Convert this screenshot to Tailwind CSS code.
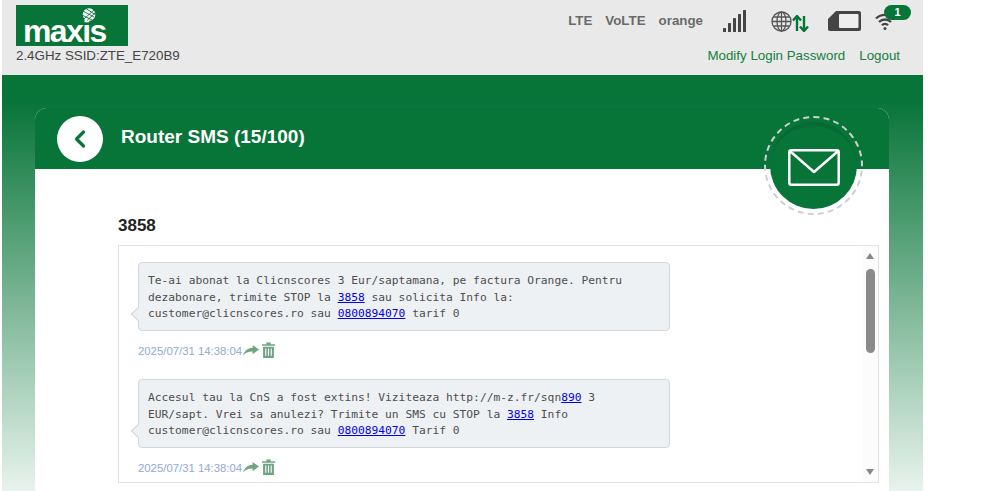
<!DOCTYPE html>
<html>
<head>
<meta charset="utf-8">
<script src="https://cdn.jsdelivr.net/npm/@tailwindcss/browser@4"></script>
</head>
<body class="bg-white overflow-hidden font-['Liberation_Sans',Arial,sans-serif]">
<div class="ml-[2px] w-[921px] h-[491px] overflow-hidden flex flex-col">
  <header class="h-[75px] shrink-0 bg-[#e9e9e9] flex justify-between pl-[14px] pr-[24px] pt-[5px]">
    <div class="flex flex-col">
      <div class="relative w-[112px] h-[41px] bg-[#077438]">
        <span class="absolute left-[7px] top-[10px] text-white font-bold text-[32px] leading-[32px] tracking-[-1.6px]">maxis</span>
        <svg class="absolute left-[66px] top-[3px]" width="14" height="13" viewBox="0 0 14 13"><circle cx="7" cy="6.500" r="6.300" fill="#fff"/><path d="M1 3 12 9M0 7l10 5M4 .5l9 6M2 11 12 2M5 12.500 13 5" stroke="#077438" stroke-width=".9" fill="none"/></svg>
      </div>
      <div class="text-[13.33px] leading-[18px] mt-px text-[#444]">2.4GHz SSID:ZTE_E720B9</div>
    </div>
    <div class="flex flex-col items-end">
      <div class="flex items-center h-[32px] text-[13.33px] font-bold text-[#6a6a6a]">
        <span>LTE</span><span class="ml-[13px]">VoLTE</span><span class="ml-[13px]">orange</span>
        <svg class="ml-[20px]" width="23" height="23" viewBox="0 0 23 23" fill="#444"><rect x="0" y="18" width="3" height="4" rx=".5"/><rect x="5" y="13" width="3" height="9" rx=".5"/><rect x="10" y="8" width="3" height="14" rx=".5"/><rect x="15" y="4" width="3" height="18" rx=".5"/><rect x="20" y="0" width="3" height="22" rx=".5"/></svg>
        <svg class="ml-[25px]" width="21" height="21" viewBox="0 0 21 21" fill="none" stroke="#555" stroke-width="1.300"><circle cx="10.500" cy="10.500" r="9.500"/><ellipse cx="10.500" cy="10.500" rx="4.500" ry="9.500"/><path d="M10.500 1v19M1 10.500h19M2.500 6h16M2.500 15h16"/></svg>
        <svg class="mt-[5px]" width="17" height="17" viewBox="0 0 17 17" fill="none" stroke="#077438" stroke-width="2.400"><path d="M5 16V2M1 5.500 5 1l4 4.500M12 1v14M8 11.500l4 4.500 4-4.500"/></svg>
        <svg class="ml-[19px]" width="33" height="20" viewBox="0 0 33 20"><path d="M8 0h23a2 2 0 0 1 2 2v16a2 2 0 0 1-2 2H2a2 2 0 0 1-2-2V8z" fill="#444"/><rect x="11" y="3" width="19.500" height="14" rx="1" fill="#eee"/></svg>
        <div class="relative ml-[14px] w-[24px] h-[24px]">
          <svg width="20" height="19" viewBox="0 0 20 19" fill="none" stroke="#444" stroke-width="2.300" class="absolute left-0 top-[3px]"><path d="M1 6.500a13 13 0 0 1 18 0M4 10a8.500 8.500 0 0 1 12 0M7 13.200a4 4 0 0 1 6 0"/><circle cx="10" cy="16.500" r="1.500" fill="#444" stroke="none"/></svg>
          <span class="absolute left-[9px] top-[-4px] w-[27px] h-[15px] rounded-full bg-[#077438] text-white text-[11px] leading-[15px] text-center font-bold">1</span>
        </div>
      </div>
      <div class="text-[13.33px] leading-[18px] mt-[10px] -mr-px text-[#13803f] flex gap-[14px]">
        <span>Modify Login Password</span><span>Logout</span>
      </div>
    </div>
  </header>
  <main class="h-[416px] shrink-0 overflow-hidden bg-[linear-gradient(180deg,#077438_0%,#077438_6%,#e8f3ed_100%)] pt-[33px] px-[33px]">
    <section class="relative bg-white rounded-t-[12px] w-[854px] h-[500px]">
      <div class="h-[61px] bg-[#077438] rounded-t-[12px] flex items-center pl-[22px]">
        <div class="w-[46px] h-[46px] rounded-full bg-white flex items-center justify-center">
          <svg width="14" height="20" viewBox="0 0 14 20" fill="none" stroke="#077438" stroke-width="3.200" stroke-linecap="round" stroke-linejoin="round"><path d="M10.500 3 3.500 10l7 7"/></svg>
        </div>
        <h1 class="ml-[18px] text-white font-bold text-[19px] leading-[22px] -mt-[3px]">Router SMS (15/100)</h1>
      </div>
      <div class="absolute left-[729px] top-[8px] w-[99px] h-[99px] rounded-full border-2 border-dashed border-[#cfcfcf] flex items-center justify-center">
        <div class="w-[87px] h-[87px] rounded-full bg-[#077438] border-t-[4px] border-[#066a33] flex items-center justify-center">
          <svg width="52" height="37" viewBox="0 0 52 37" fill="none" stroke="#fff" stroke-width="2.500" stroke-linejoin="round" stroke-linecap="round"><rect x="1.300" y="1.300" width="49.400" height="34.400" rx="2"/><path d="M3 3 26 23 49 3"/></svg>
        </div>
      </div>
      <div class="pl-[83px] pr-[10px]">
        <h2 class="mt-[47px] text-[17px] leading-[20px] font-bold text-[#222]">3858</h2>
        <div class="relative mt-[9px] h-[238px] w-[761px] border border-[#e3e3e3] bg-white pl-[19px] pt-[16px]">
          <article class="h-[117px]">
            <div class="relative w-[532px] h-[69px] bg-[#eef1f4] border border-[#d3d6d8] rounded-[4px] pl-[9px] pt-[10px] font-['DejaVu_Sans_Mono',monospace] text-[11.25px] leading-[16.500px] text-[#4d4d4d]">
              <span class="absolute left-[-6px] top-[46px] w-[10px] h-[10px] rotate-45 bg-[#eef1f4] border-l border-b border-[#d3d6d8]"></span>
              <p class="relative whitespace-nowrap">Te-ai abonat la Clicnscores 3 Eur/saptamana, pe factura Orange. Pentru<br>dezabonare, trimite STOP la <a class="text-[#0000ee] underline">3858</a> sau solicita Info la:<br>customer@clicnscores.ro sau <a class="text-[#0000ee] underline">0800894070</a> tarif 0</p>
            </div>
            <div class="mt-[11px] flex items-center text-[11.35px] leading-[16px] text-[#8fa9d6]">
              <span>2025/07/31 14:38:04</span>
              <svg class="ml-px" width="16" height="11" viewBox="0 0 15 12" fill="#6fa583" preserveAspectRatio="none"><path d="M9 0l6 5-6 5V7C5 7 2 8.500 0 11.500 1 7 4 3.500 9 3z"/></svg>
              <svg class="ml-[3px] mb-px" width="13" height="16" viewBox="0 0 12 15" fill="#6fa583" preserveAspectRatio="none"><path d="M0 2h4V.5h4V2h4v1.500H0z"/><path fill-rule="evenodd" d="M1 4.500h10V15H1zM3 6v7h1V6zm2.500 0v7h1V6zM8 6v7h1V6z"/></svg>
            </div>
          </article>
          <article>
            <div class="relative w-[532px] h-[69px] bg-[#eef1f4] border border-[#d3d6d8] rounded-[4px] pl-[9px] pt-[10px] font-['DejaVu_Sans_Mono',monospace] text-[11.25px] leading-[16.500px] text-[#4d4d4d]">
              <span class="absolute left-[-6px] top-[46px] w-[10px] h-[10px] rotate-45 bg-[#eef1f4] border-l border-b border-[#d3d6d8]"></span>
              <p class="relative whitespace-nowrap">Accesul tau la CnS a fost extins! Viziteaza http://m-z.fr/sqn<a class="text-[#0000ee] underline">890</a> 3<br>EUR/sapt. Vrei sa anulezi? Trimite un SMS cu STOP la <a class="text-[#0000ee] underline">3858</a> Info<br>customer@clicnscores.ro sau <a class="text-[#0000ee] underline">0800894070</a> Tarif 0</p>
            </div>
            <div class="mt-[11px] flex items-center text-[11.35px] leading-[16px] text-[#8fa9d6]">
              <span>2025/07/31 14:38:04</span>
              <svg class="ml-px" width="16" height="11" viewBox="0 0 15 12" fill="#6fa583" preserveAspectRatio="none"><path d="M9 0l6 5-6 5V7C5 7 2 8.500 0 11.500 1 7 4 3.500 9 3z"/></svg>
              <svg class="ml-[3px] mb-px" width="13" height="16" viewBox="0 0 12 15" fill="#6fa583" preserveAspectRatio="none"><path d="M0 2h4V.5h4V2h4v1.500H0z"/><path fill-rule="evenodd" d="M1 4.500h10V15H1zM3 6v7h1V6zm2.500 0v7h1V6zM8 6v7h1V6z"/></svg>
            </div>
          </article>
          <div class="absolute right-0 top-0 bottom-0 w-[15px] bg-[#fcfcfc] flex flex-col items-center justify-between py-[7px] pr-px">
            <span class="w-0 h-0 border-x-[4.500px] border-x-transparent border-b-[6px] border-b-[#888]"></span>
            <span class="absolute left-[3px] top-[23px] w-[9px] h-[84px] rounded-full bg-[#8a8a8a]"></span>
            <span class="w-0 h-0 border-x-[4.500px] border-x-transparent border-t-[6px] border-t-[#888]"></span>
          </div>
        </div>
      </div>
    </section>
  </main>
</div>
</body>
</html>
